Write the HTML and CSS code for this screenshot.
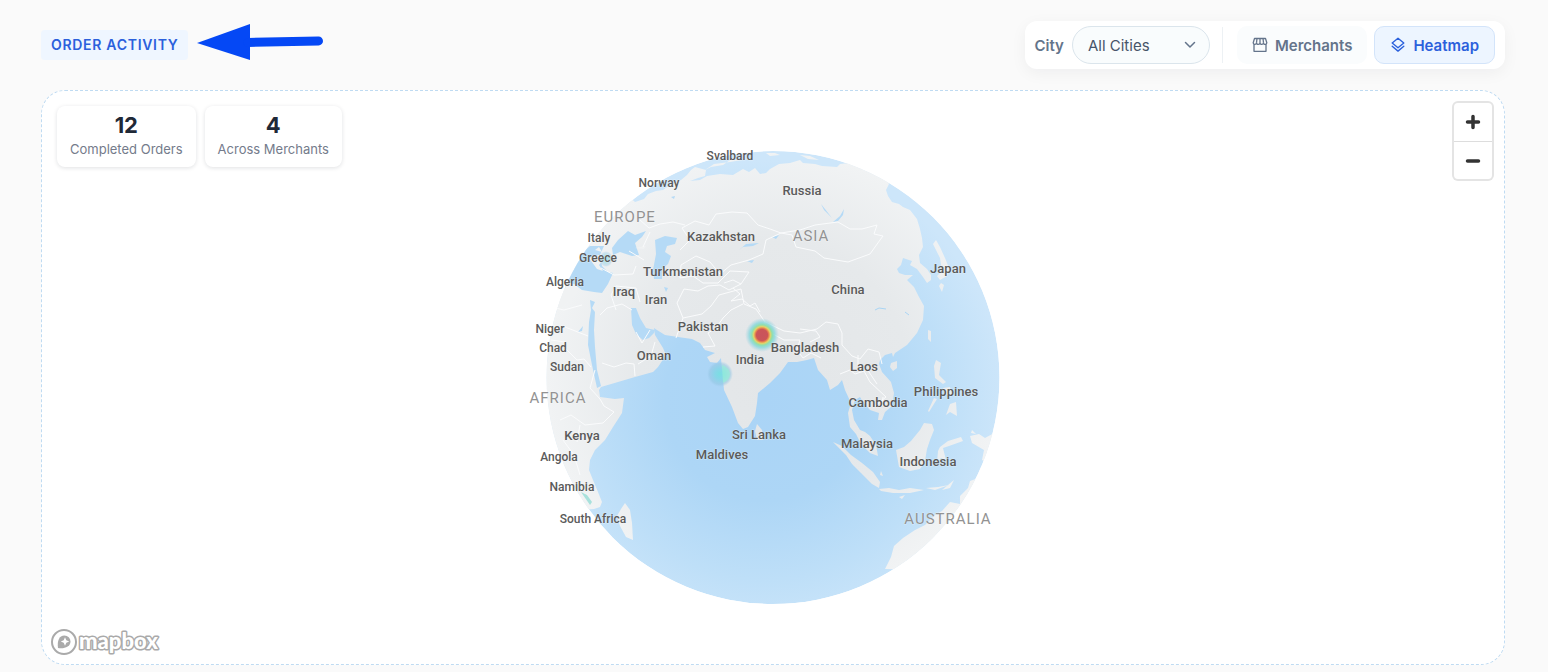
FILE: index.html
```html
<!DOCTYPE html>
<html lang="en">
<head>
<meta charset="utf-8">
<meta name="viewport" content="width=device-width, initial-scale=1">
<title>Order Activity</title>
<link rel="stylesheet" href="styles.css">
</head>
<body>
<main class="page">
  <header class="header">
    <div class="heading">
      <h1 class="title">ORDER ACTIVITY</h1>
      <svg class="arrow" width="126" height="42" viewBox="197 24 126 42" aria-hidden="true">
        <path d="M197 43 250 24V60Z" fill="#0548f5"/>
        <path d="M248 42.500 318.500 41" stroke="#0548f5" stroke-width="9" stroke-linecap="round"/>
      </svg>
    </div>
    <div class="toolbar">
      <label class="city-label" for="city">City</label>
      <div class="select-wrap">
        <select id="city" class="select"><option>All Cities</option></select>
        <svg class="chevron" width="12" height="8" viewBox="0 0 12 8" fill="none" stroke="#64748b" stroke-width="1.500" stroke-linecap="round" stroke-linejoin="round" aria-hidden="true"><path d="M1.500 1.500 6 6l4.500-4.500"/></svg>
      </div>
      <span class="divider"></span>
      <div class="modes">
        <button class="mode" type="button">
          <svg width="16" height="16" viewBox="0 0 16 16" fill="none" stroke="currentColor" stroke-width="1.300" stroke-linejoin="round" aria-hidden="true"><path d="M2.500 1.500h11l1.300 4.200c0 2.100-3.300 2.100-3.300 0 0 2.100-3.500 2.100-3.500 0 0 2.100-3.500 2.100-3.500 0 0 2.100-3.300 2.100-3.300 0zM4.500 5.700l.5-4.200M8 5.700V1.500M11.500 5.700 11 1.500M2 7.300v7h12v-7"/></svg>
          Merchants
        </button>
        <button class="mode mode-active" type="button" aria-pressed="true">
          <svg width="16" height="16" viewBox="0 0 16 16" fill="none" stroke="currentColor" stroke-width="1.400" stroke-linejoin="round" stroke-linecap="round" aria-hidden="true"><path d="M8 1.200 13.800 6 8 10.800 2.200 6zM2.200 9.300 8 14.100l5.800-4.800"/></svg>
          Heatmap
        </button>
      </div>
    </div>
  </header>

  <section class="map" aria-label="Order heatmap">
    <svg class="globe" width="500" height="500" viewBox="523 128 500 500" role="img" aria-label="Globe">
      <defs>
        <radialGradient id="sea" gradientUnits="userSpaceOnUse" cx="765" cy="400" r="240">
          <stop offset="0" stop-color="#aad4f6"/><stop offset=".42" stop-color="#add6f6"/><stop offset=".75" stop-color="#bedff8"/><stop offset="1" stop-color="#cde6fa"/>
        </radialGradient>
        <radialGradient id="ground" gradientUnits="userSpaceOnUse" cx="773" cy="377" r="226">
          <stop offset="0" stop-color="#e3e6e8"/><stop offset=".6" stop-color="#e6e9eb"/><stop offset="1" stop-color="#f1f3f4"/>
        </radialGradient>
        <radialGradient id="hot">
          <stop offset="0" stop-color="#c9545c"/><stop offset=".33" stop-color="#cb5558"/><stop offset=".41" stop-color="#e8894f"/><stop offset=".49" stop-color="#e5d267"/><stop offset=".6" stop-color="#8fdfae"/><stop offset=".75" stop-color="#7cd5dc" stop-opacity=".7"/><stop offset="1" stop-color="#9ccfdf" stop-opacity="0"/>
        </radialGradient>
        <radialGradient id="warm">
          <stop offset="0" stop-color="#79dfe2"/><stop offset=".4" stop-color="#7fd6e5" stop-opacity=".8"/><stop offset=".8" stop-color="#92c6e2" stop-opacity=".55"/><stop offset="1" stop-color="#9bcbea" stop-opacity="0"/>
        </radialGradient>
        <clipPath id="disc"><circle cx="773" cy="377.500" r="226.500"/></clipPath>
      </defs>
      <g clip-path="url(#disc)">
        <circle cx="773" cy="377.500" r="226.500" fill="url(#sea)"/>
        <g fill="url(#ground)">
          <path d="M610 180 635 202 644 199 648 194 656 191 663 190 670 185 681 180 687 175 691 170 695 167 706 170 705 176 698 178 690 181 700 180 707 176 720 174 733 175 743 169 749 172 755 168 760 174 766 173 770 169 779 164 790 163 800 160 803 163 815 164 822 166 837 167 840 164 849 163 870 150 889 184 886 190 888 196 892 202 899 204 903 207 910 210 917 219 920 229 922 238 923 247 919 255 920 263 927 269 931 275 931 280 927 283 923 277 917 269 910 265 912 261 903 258 901 265 897 269 899 273 905 275 913 275 907 280 914 287 919 297 924 306 923 320 917 333 907 345 895 353 893 357 892 353 885 355 880 360 879 364 882 372 891 382 894 393 892 406 885 412 882 420 878 420 879 413 870 410 863 402 860 397 855 400 852 410 854 420 860 430 865 432 870 436 876 445 878 456 870 453 861 444 856 434 850 427 848 413 851 403 845 390 842 380 838 385 830 390 827 380 818 370 814 358 807 360 797 362 788 362 780 373 770 383 758 393 757 403 755 416 748 427 743 429 738 423 732 407 724 390 722 370 721 358 717 363 710 362 707 357 715 353 705 350 700 343 692 339 678 337 665 335 657 330 654 328 655 335 663 348 666 355 658 367 653 372 635 377 618 382 601 387 599 390 600 397 615 399 624 398 622 413 613 427 605 440 595 450 590 460 589 470 593 480 598 492 602 502 600 507 594 509 580 510 530 480 530 300 560 220Z"/>
          <path d="M625 503 630 510 632 523 633 540 626 537 620 526 617 516 621 509Z"/>
          <path d="M757 424 762 430 763 440 757 440 755 431Z"/>
          <path d="M833 442 842 446 851 455 862 463 873 472 880 482 879 488 872 484 861 473 852 464 846 455Z"/>
          <path d="M879 489 889 488 899 490 910 488 924 490 910 493 893 493 881 491ZM926 488 938 487 949 485 935 490ZM938 491 950 488 954 480 942 490Z"/>
          <path d="M896 450 904 447 911 441 920 430 924 423 932 424 934 430 930 440 927 449 925 461 920 469 910 471 899 467Z"/>
          <path d="M940 447 948 441 961 437 963 441 949 446 943 448 946 460 941 458 937 463 938 451Z"/>
          <path d="M936 360 941 363 939 375 946 382 943 384 935 378 934 366ZM950 404 956 402 957 416 950 412 946 415ZM943 388 950 387 952 395 947 395ZM934 398 937 399 929 412 928 411Z"/>
          <path d="M891 363 897 361 897 368 893 371 890 367ZM928 330 931 331 931 342 928 339Z"/>
          <path d="M970 436 979 434 985 438 996 432 1000 470 982 460 984 450 972 443Z"/>
          <path d="M970 481 968 488 960 496 960 504 950 502 942 511 935 515 925 525 915 530 903 538 894 546 891 557 885 569 930 570 1000 470Z"/>
          <path d="M936 240 940 247 945 258 949 268 947 276 940 280 937 276 942 271 940 258 933 244ZM941 283 944 285 942 292 939 286Z"/>
          <path d="M705 170 714 164 730 162 742 160 730 160 723 165 711 167ZM766 153 775 153 780 155 770 156ZM800 155 810 156 819 160 808 159Z"/>
          <path d="M899 497 905 495 902 499ZM881 471 883 476 880 475ZM890 474 892 477ZM844 462 846 464ZM972 430 976 434 971 433Z"/>
        </g>
        <g fill="#b5daf6">
          <path d="M540 300 552 285 584 251 590 246 604 246 600 255 602 266 608 272 613 273 608 284 602 293 594 292 582 290 574 284Z"/>
          <path d="M612 248 618 240 628 231 635 235 646 231 642 237 635 243 639 255 632 256 620 252 613 255Z"/>
          <path d="M655 240 665 236 677 238 675 244 667 246 665 252 671 256 668 264 662 269 662 279 654 279 653 270 656 254Z"/>
          <path d="M590 300 595 302 592 308 595 312 594 330 595 347 597 370 601 386 597 388 592 365 588 345 589 322 591 310Z"/>
          <path d="M631 308 636 308 640 318 646 328 655 330 654 333 649 338 643 340 636 334 632 325Z"/>
          <path d="M844 209 843 215 838 221 833 222 840 216ZM739 250 746 244 759 243 753 246 743 247ZM747 261 754 260 752 263ZM664 287 668 288 666 292ZM772 237 779 235 776 239ZM821 204 825 209 832 218 824 210Z"/>
          <path d="M578 332 583 326 582 331ZM671 197 675 196 674 199ZM685 209 690 206Z"/>
        </g>
        <g fill="#f0f2f3"><path d="M540 284 560 280 574 284 578 291 560 310 530 310ZM589 258 599 255 604 259 599 265 603 271 597 269ZM635 248 646 246 644 249ZM595 250 599 247 602 252Z"/></g>
        <g class="borders">
          <path d="M680 250 690 240 682 228 695 221 709 225 716 214 732 212 747 213 758 225 770 229 781 233 792 235 796 247 815 251 824 258 848 262 870 254 880 240 883 236 874 234 877 225 862 229 850 229 838 222 815 225 800 230 781 233 766 240 763 254 749 260 731 265 720 274 710 262 696 256 681 265 680 278"/>
          <path d="M680 278 693 276 703 283 718 283 730 271 749 272 741 284 729 290 720 285 708 286 698 291 684 289 677 303 683 318 676 338M683 318 702 314 711 306 719 295 730 292 741 289 744 304 756 309 765 322 784 331 800 333 817 329 826 322 838 324 842 333 842 345 852 356 860 359 868 349 879 352 882 364"/>
          <path d="M743 304 731 310 723 318 716 328 708 333 715 346 703 347M764 322 771 333 784 340 800 340 797 350 803 358 811 353 821 358M800 329 816 331 820 337 810 342M840 374 850 370 855 374 864 371 870 382 886 397 875 406"/>
          <path d="M733 288 740 294 731 301 742 299 750 306 755 303 760 312M741 284 733 280 724 283M650 330 642 343 636 332M602 363 614 367 626 363 634 364 635 376M638 364 651 356 655 342M600 315 607 308 622 304 632 310M616 310 611 295 616 286 636 288 640 302"/>
          <path d="M565 327 588 336M595 370 590 388 600 399 604 406 614 412 603 423 585 425 571 415 560 420M591 367 584 359 577 360 566 349M551 340 565 342M580 425 577 442M563 440 574 455 580 475M551 307 564 310 582 305M601 268 614 275 633 274 636 266M640 220 649 228 660 224 673 222 685 225M650 232 643 247M629 251 644 260"/>
          <path d="M883 397 882 406M858 355 858 366 867 369 877 384"/>
        </g>
        <path d="M875 310 879 308 886 309M905 312 909 315" fill="none" stroke="#a9d4f4"/>
        <path d="M581 492 587 495 592 502 590 505Z" fill="#a8e1dc"/>
        <ellipse cx="606" cy="259" rx="7" ry="8" fill="url(#warm)" opacity=".65"/>
      </g>
      <circle cx="720" cy="374" r="13" fill="url(#warm)"/>
      <path d="M722 365Q730 368 730 374T723 383Z" fill="#93f0d6" opacity=".6"/>
      <circle cx="762" cy="335" r="17" fill="url(#hot)"/>
      <g class="places">
        <text x="730" y="160" class="small">Svalbard</text><text x="659" y="187" class="small">Norway</text>
        <text x="802" y="195">Russia</text><text x="599" y="242" class="small">Italy</text>
        <text x="598" y="262" class="small">Greece</text><text x="721" y="241">Kazakhstan</text>
        <text x="683" y="276">Turkmenistan</text><text x="565" y="286" class="small">Algeria</text>
        <text x="624" y="296">Iraq</text><text x="656" y="304">Iran</text>
        <text x="848" y="294">China</text><text x="948" y="273">Japan</text>
        <text x="703" y="331">Pakistan</text><text x="805" y="352">Bangladesh</text>
        <text x="750" y="364">India</text><text x="654" y="360">Oman</text>
        <text x="550" y="333" class="small">Niger</text><text x="553" y="352" class="small">Chad</text>
        <text x="567" y="371" class="small">Sudan</text><text x="864" y="371">Laos</text>
        <text x="878" y="407">Cambodia</text><text x="946" y="396">Philippines</text>
        <text x="582" y="440">Kenya</text><text x="559" y="461" class="small">Angola</text>
        <text x="759" y="439">Sri Lanka</text><text x="722" y="459">Maldives</text>
        <text x="867" y="448">Malaysia</text><text x="928" y="466">Indonesia</text>
        <text x="572" y="491" class="small">Namibia</text><text x="593" y="523" class="small">South Africa</text>
      </g>
      <g class="continents">
        <text x="625" y="222">EUROPE</text><text x="811" y="241">ASIA</text>
        <text x="558" y="403">AFRICA</text><text x="948" y="524">AUSTRALIA</text>
      </g>
    </svg>

    <div class="stats">
      <div class="stat"><strong class="stat-value">12</strong><span class="stat-label">Completed Orders</span></div>
      <div class="stat"><strong class="stat-value">4</strong><span class="stat-label">Across Merchants</span></div>
    </div>

    <div class="zoom">
      <button class="zoom-button" type="button" aria-label="Zoom in"><svg width="16" height="16" viewBox="0 0 16 16" stroke="#333" stroke-width="3.500" stroke-linecap="round" aria-hidden="true"><path d="M2.500 8h11M8 2.500v11"/></svg></button>
      <button class="zoom-button" type="button" aria-label="Zoom out"><svg width="16" height="16" viewBox="0 0 16 16" stroke="#333" stroke-width="3.500" stroke-linecap="round" aria-hidden="true"><path d="M2.500 8h11"/></svg></button>
    </div>

    <a class="brand" href="#" aria-label="Mapbox">
      <svg width="28" height="28" viewBox="0 0 28 28" aria-hidden="true">
        <circle cx="14" cy="14" r="12" fill="#fff" stroke="#aaa" stroke-width="2"/>
        <path d="M8 20C7 13 9 7.500 14.500 7.500A6 6 0 0 1 20.500 13.500C20.500 19 14 21 8 20Z" fill="#aaa"/>
        <path d="m15 9.300 1.300 2.900 2.900 1.300-2.900 1.300L15 17.700l-1.300-2.900-2.900-1.300 2.900-1.300z" fill="#fff"/>
      </svg>
      <svg width="88" height="36" viewBox="0 0 88 36" aria-hidden="true"><text class="wordmark" x="1" y="25">mapbox</text></svg>
    </a>
  </section>
</main>
</body>
</html>
```
FILE: styles.css
```css
* { box-sizing: border-box; }
body { margin: 0; background: #fafafa; font-family: Inter, "Liberation Sans", sans-serif; color: #1f2937; }
button, select { font: inherit; }
.page { display: flex; flex-direction: column; gap: 21px; min-height: 100vh; padding: 21px 43px 7px 41px; }
.header { display: flex; flex-wrap: wrap; align-items: center; justify-content: space-between; gap: 16px; }
.heading { display: flex; align-items: center; gap: 9px; }
.title { margin: 0; padding: 0 10px; border-radius: 4px; background: #eff6ff; color: #2b60dc; font-size: 14px; line-height: 30px; font-weight: 600; letter-spacing: 0.05em; }
.toolbar { display: flex; align-items: center; height: 48px; padding: 5px 10px; border-radius: 12px; background: #fff; box-shadow: 0 4px 16px rgba(15, 23, 42, .05); }
.city-label { margin-right: 8px; color: #64748b; font-size: 15px; font-weight: 600; }
.select-wrap { display: grid; align-items: center; width: 138px; }
.select { grid-area: 1 / 1; appearance: none; width: 100%; height: 38px; padding: 0 32px 0 15px; border: 1px solid #dbe5ec; border-radius: 19px; background: #f9fcfd; color: #475569; font-size: 15px; }
.chevron { grid-area: 1 / 1; justify-self: end; margin-right: 14px; pointer-events: none; }
.divider { width: 1px; height: 36px; margin: 0 14px 0 12px; background: #edf1f4; }
.modes { display: flex; gap: 7px; }
.mode { display: flex; align-items: center; gap: 7px; height: 38px; padding: 0 14px; border: 1px solid transparent; border-radius: 10px; background: #fafcfd; color: #64748b; font-size: 15px; font-weight: 600; }
.mode-active { padding: 0 15px; border-color: #d3e4fa; background: #edf5ff; color: #2b60dc; }
.map { position: relative; flex: 1; display: flex; align-items: center; justify-content: center; border: 1px dashed #bfdbf2; border-radius: 24px; background: #fff; overflow: hidden; }
.borders { fill: none; stroke: #fafbfc; stroke-width: 1; stroke-linejoin: round; }
.places, .continents { font-family: Roboto, "Liberation Sans", sans-serif; text-anchor: middle; paint-order: stroke; stroke-linejoin: round; }
.places { fill: #5a5a5a; stroke: rgba(255, 255, 255, .4); stroke-width: 1; font-size: 13px; font-weight: 500; }
.small { font-size: 12px; }
.continents { fill: #929292; stroke: rgba(255, 255, 255, .4); stroke-width: 1; font-size: 15px; letter-spacing: 1px; }
.stats { position: absolute; top: 15px; left: 15px; display: flex; gap: 9px; }
.stat { display: flex; flex-direction: column; align-items: center; padding: 6px 13px 8px; border-radius: 8px; background: #fff; box-shadow: 0 1px 4px rgba(15, 23, 42, .13); }
.stat-value { font-size: 22px; line-height: 27px; font-weight: 700; }
.stat-label { color: #747b8b; font-size: 13px; line-height: 20px; }
.zoom { position: absolute; top: 12px; right: 12px; width: 38px; border-radius: 4px; background: #fff; box-shadow: 0 0 0 2px #e4e4e4; }
.zoom-button { display: flex; align-items: center; justify-content: center; width: 100%; height: 38px; padding: 0; border: 0; background: transparent; }
.zoom-button + .zoom-button { border-top: 1px solid #ddd; }
.brand { position: absolute; left: 8px; bottom: 4px; display: flex; align-items: center; text-decoration: none; }
.wordmark { fill: #fff; stroke: #aaa; stroke-width: 3; stroke-linejoin: round; paint-order: stroke; font-family: Lato, sans-serif; font-size: 22px; font-weight: 900; }
```
